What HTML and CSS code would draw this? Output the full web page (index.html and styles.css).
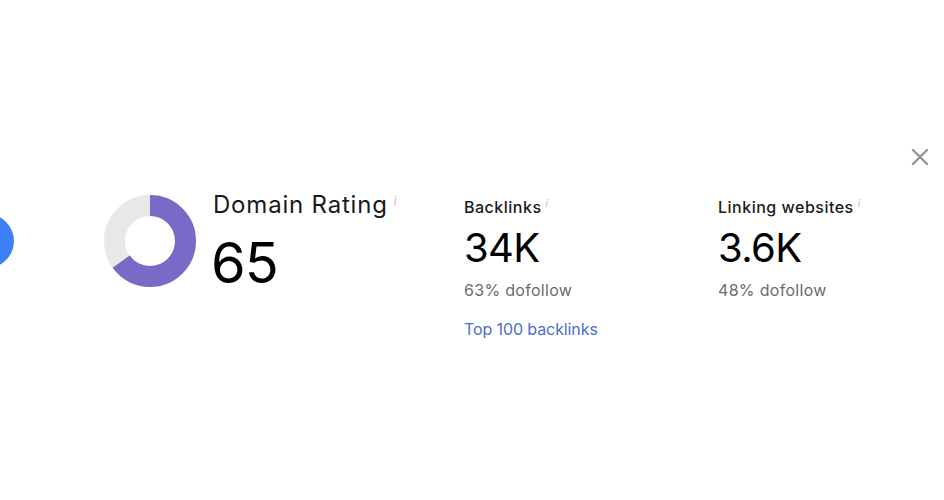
FILE: index.html
```html
<!DOCTYPE html>
<html>
<head>
<meta charset="utf-8">
<link rel="stylesheet" href="styles.css">
</head>
<body>
<div class="page">
  <div class="blue-dot"></div>
  <button class="close" aria-label="Close">
    <svg width="18" height="18" viewBox="0 0 18 18"><path d="M2 2L16 16M16 2L2 16" stroke="#959595" stroke-width="2.4" stroke-linecap="round"/></svg>
  </button>
  <div class="stats">
    <div class="dr">
      <svg class="donut" width="92" height="92" viewBox="0 0 92 92">
        <circle cx="46" cy="46" r="35.5" fill="none" stroke="#e8e8e8" stroke-width="21"/>
        <circle cx="46" cy="46" r="35.5" fill="none" stroke="#7b69c7" stroke-width="21"
          stroke-dasharray="144.99 223.05" transform="rotate(-90 46 46)"/>
      </svg>
      <div class="dr-text">
        <div class="dr-label">Domain Rating<sup class="info">i</sup></div>
        <div class="dr-value">65</div>
      </div>
    </div>
    <div class="metric">
      <div class="m-label">Backlinks<sup class="info">i</sup></div>
      <div class="m-value">34K</div>
      <div class="m-sub">63% dofollow</div>
      <a class="m-link" href="#">Top 100 backlinks</a>
    </div>
    <div class="metric">
      <div class="m-label">Linking websites<sup class="info">i</sup></div>
      <div class="m-value">3.6K</div>
      <div class="m-sub">48% dofollow</div>
    </div>
  </div>
</div>
</body>
</html>
```
FILE: styles.css
```css
* { box-sizing: border-box; }
html, body { margin: 0; padding: 0; background: #fff; }
body { font-family: Inter, "Noto Sans", "Liberation Sans", sans-serif; color: #111; }
.page { position: relative; width: 944px; height: 500px; overflow: hidden; }
.blue-dot {
  position: absolute; left: -40px; top: 214px; width: 54px; height: 54px;
  border-radius: 50%; background: #3b80f6;
}
.close {
  position: absolute; left: 911px; top: 148px; width: 18px; height: 18px;
  padding: 0; border: 0; background: none; display: block;
}
.close svg { display: block; }
.stats { display: flex; padding: 195px 0 0 104px; }
.dr { display: flex; flex: none; width: 360px; gap: 17px; }
.donut { display: block; flex: none; }
.dr-text { margin-top: -6px; }
.dr-label { font-size: 24px; line-height: 32px; font-weight: 400; color: #1a1a1a; letter-spacing: 0.8px; }
.dr-value { font-size: 56px; line-height: 62px; font-weight: 400; color: #000; letter-spacing: -1px; margin-left: -2px; margin-top: 11px; }
.info { font-size: 12px; color: #aaa; vertical-align: top; position: relative; top: -4px; margin-left: 6px; font-style: italic; font-weight: 300; }
.metric { flex: none; width: 254px; }
.m-label { font-size: 16px; line-height: 24px; font-weight: 500; color: #1a1a1a; letter-spacing: 0.5px; }
.m-label .info { font-size: 10px; top: -4px; margin-left: 4px; }
.m-value { font-size: 40px; line-height: 48px; font-weight: 400; color: #000; letter-spacing: -0.6px; margin-top: 5px; }
.m-sub { font-size: 16px; line-height: 22px; color: #6b6b6b; margin-top: 7px; letter-spacing: 0.3px; }
.m-link { display: block; margin-top: 17px; font-size: 16px; line-height: 22px; color: #4d6ec7; text-decoration: none; letter-spacing: -0.1px; }
```
